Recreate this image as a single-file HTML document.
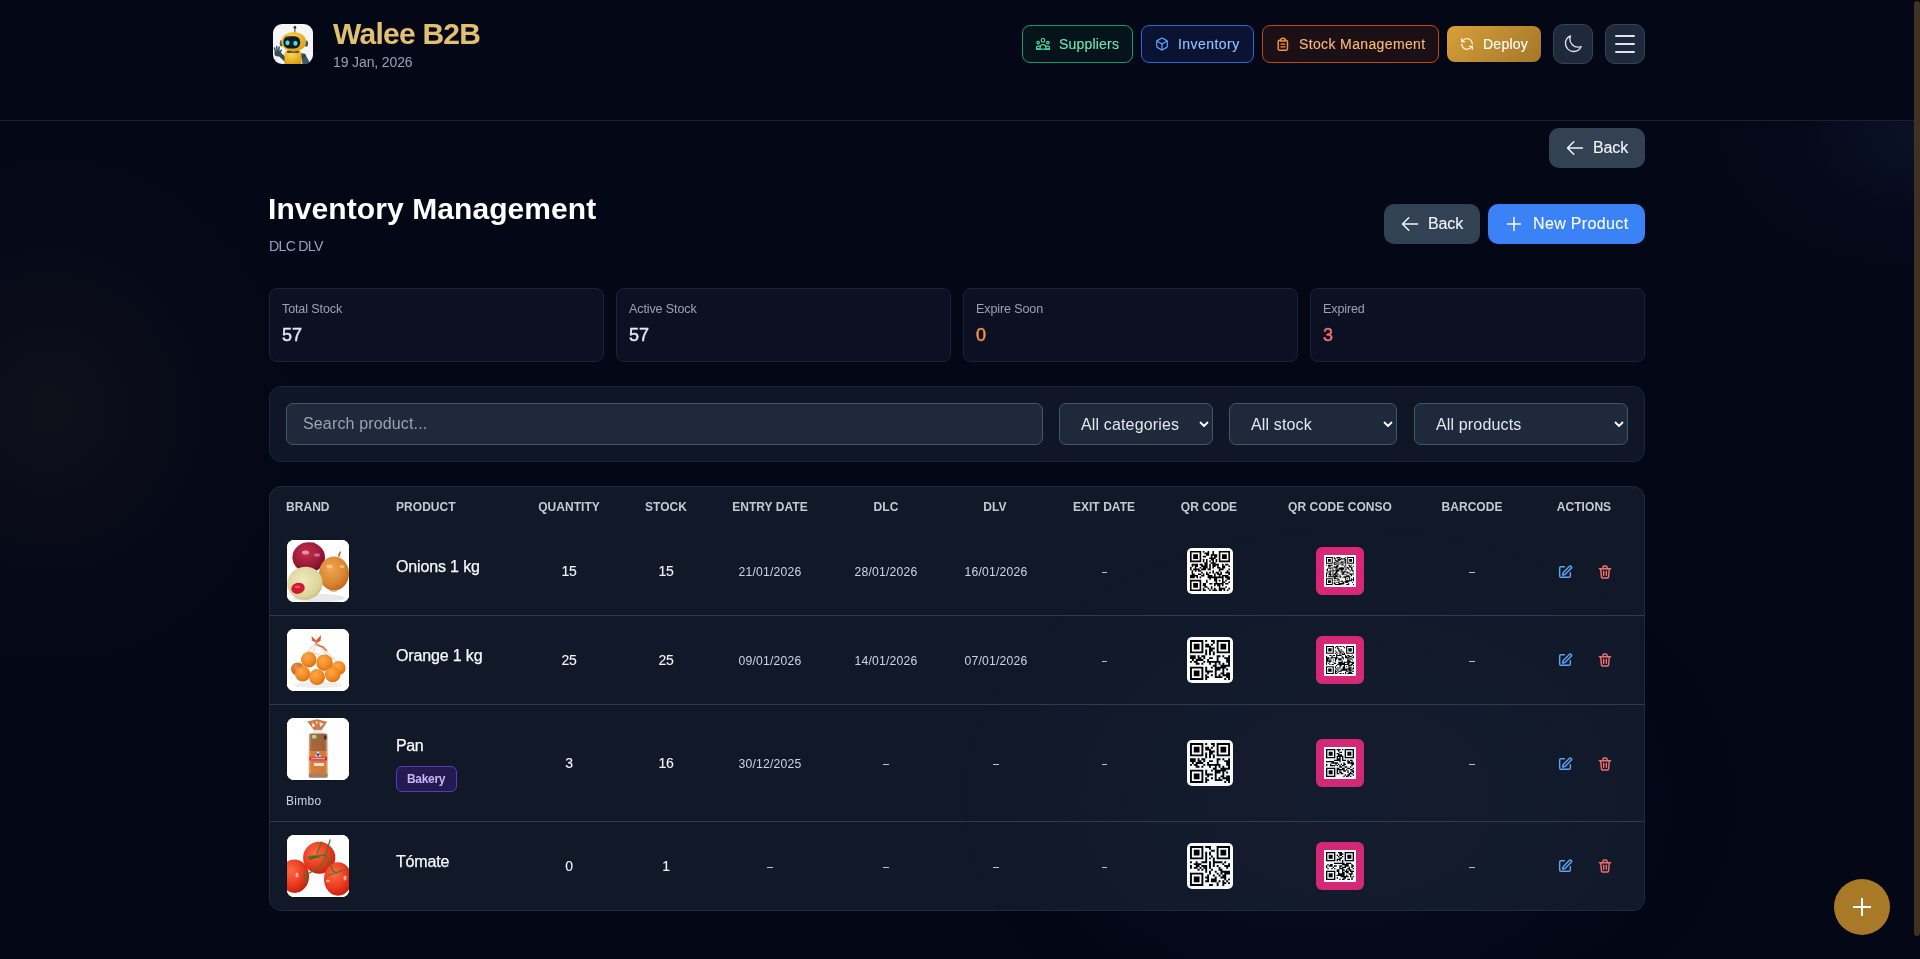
<!DOCTYPE html><html><head><meta charset="utf-8"><title>Inventory Management</title><style>
html,body{margin:0;padding:0;width:1920px;height:959px;overflow:hidden;background:#030716;}
#app{position:relative;width:1920px;height:959px;overflow:hidden;background:#030716;font-family:"Liberation Sans", sans-serif;}
.t{position:absolute;line-height:1;white-space:nowrap;will-change:transform;}
.b{position:absolute;box-sizing:border-box;}
</style></head><body><div id="app">
<div class="b" style="left:-230px;top:110px;width:560px;height:600px;border-radius:50%;background:radial-gradient(closest-side,rgba(34,32,34,0.38),rgba(24,22,28,0.14) 55%,rgba(0,0,0,0) 100%);"></div>
<div class="b" style="left:1000px;top:560px;width:620px;height:420px;border-radius:50%;background:radial-gradient(closest-side,rgba(40,60,90,0.10),rgba(0,0,0,0) 100%);"></div>
<div class="b" style="left:1500px;top:121px;width:420px;height:300px;overflow:hidden;"><div class="b" style="left:200px;top:-130px;width:440px;height:290px;border-radius:50%;background:radial-gradient(closest-side,rgba(35,55,95,0.24),rgba(20,30,60,0.07) 60%,rgba(0,0,0,0) 100%);"></div></div>
<div class="b" style="left:0px;top:120px;width:1920px;height:1px;background:#1a2030;"></div>
<svg class="b" style="left:273px;top:24px;" width="40" height="40" viewBox="0 0 40 40" fill="none"><defs><radialGradient id="yg" cx="0.4" cy="0.3" r="0.8"><stop offset="0" stop-color="#ffd54a"/><stop offset="1" stop-color="#d99a10"/></radialGradient></defs>
<rect x="0" y="0" width="40" height="40" rx="9" fill="#f6f6f6"/>
<line x1="21.9" y1="3.5" x2="21.9" y2="9" stroke="#3a3a3a" stroke-width="1"/><circle cx="21.9" cy="3.4" r="1.4" fill="#333"/>
<g fill="#35505c"><rect x="1.3" y="23.2" width="1.5" height="5.5" rx="0.75" transform="rotate(-18 2 26)"/><rect x="3.2" y="21.8" width="1.5" height="6" rx="0.75" transform="rotate(-6 4 25)"/><rect x="5.1" y="22.3" width="1.5" height="5.8" rx="0.75" transform="rotate(8 5.8 25)"/><rect x="7" y="25.2" width="1.5" height="4" rx="0.75" transform="rotate(35 7.7 27)"/><ellipse cx="4.8" cy="29.5" rx="3.4" ry="3"/><path d="M3.5 30 L7.5 28.5 L13 33 L12 38 Z"/></g>
<path d="M27.5 29 q4.5 0.5 6.5 4.5 l2.5 4.5 l-3 2 h-4z" fill="#3b5866"/><circle cx="30.5" cy="32" r="2.6" fill="#2e4853"/>
<path d="M11.5 30 q0-3 3-3.3 h11 q3 0.3 3 3.3 v10 h-17z" fill="url(#yg)"/>
<rect x="14" y="26.5" width="12" height="2.2" rx="1" fill="#2f3c42"/>
<ellipse cx="8.7" cy="19.3" rx="1.9" ry="3.2" fill="#3b5866"/><ellipse cx="33.2" cy="19.6" rx="1.9" ry="3.2" fill="#3b5866"/>
<ellipse cx="20.7" cy="17.8" rx="12.4" ry="9.9" fill="url(#yg)"/>
<rect x="10.4" y="12.2" width="16.8" height="12.2" rx="5.5" fill="#17191d"/>
<ellipse cx="14.6" cy="12.9" rx="3" ry="0.8" fill="#555" opacity=".6"/>
<ellipse cx="14.5" cy="18.8" rx="2.1" ry="2.5" fill="#2fe6f7"/><ellipse cx="22.4" cy="19.3" rx="2.1" ry="2.5" fill="#2fe6f7"/></svg>
<div class="t" style="top:18.90px;font-size:30px;color:#e2c072;font-weight:700;letter-spacing:-0.75px;left:333.3px;">Walee B2B</div>
<div class="t" style="top:55.15px;font-size:14px;color:#94a3b8;font-weight:400;letter-spacing:-0.12px;left:333px;">19 Jan, 2026</div>
<div class="b" style="left:1022px;top:25px;width:111px;height:38px;border-radius:8px;background:#04141a;border:1px solid #169a70;"></div>
<svg class="b" style="left:1035px;top:36px;" width="16" height="16" viewBox="0 0 24 24" fill="none"><g stroke="#4fd8a4" stroke-width="1.75" fill="none" stroke-linecap="round" stroke-linejoin="round"><ellipse cx="12" cy="6.5" rx="2.6" ry="2.9"/><circle cx="19.3" cy="9.9" r="1.9"/><circle cx="4.7" cy="9.9" r="1.9"/><path d="M7.6 19.8 v-2.3 a4.4 4.6 0 0 1 8.8 0 v2.3"/><path d="M2.3 19.8 h19.4"/><path d="M7.6 19.8 h-5.3 v-2.6 a1.9 1.9 0 0 1 1.9 -1.9 h3.6"/><path d="M16.4 19.8 h5.3 v-2.6 a1.9 1.9 0 0 0 -1.9 -1.9 h-3.6"/></g></svg>
<div class="t" style="top:37.15px;font-size:14px;color:#6ee7b7;font-weight:400;letter-spacing:0.2px;-webkit-text-stroke:0.12px #6ee7b7;left:1059px;">Suppliers</div>
<div class="b" style="left:1141px;top:25px;width:113px;height:38px;border-radius:8px;background:#0a1331;border:1px solid #2d62dc;"></div>
<svg class="b" style="left:1154px;top:36px;" width="16" height="16" viewBox="-1.6 -1.6 27.2 27.2" fill="none"><g stroke="#60a5fa" stroke-width="2" stroke-linecap="round" stroke-linejoin="round"><path d="M21 8a2 2 0 0 0-1-1.73l-7-4a2 2 0 0 0-2 0l-7 4A2 2 0 0 0 3 8v8a2 2 0 0 0 1 1.73l7 4a2 2 0 0 0 2 0l7-4A2 2 0 0 0 21 16Z"/><path d="m3.3 7 8.7 5 8.7-5"/><path d="M12 22V12"/></g></svg>
<div class="t" style="top:37.15px;font-size:14px;color:#93c5fd;font-weight:400;letter-spacing:0.45px;-webkit-text-stroke:0.12px #93c5fd;left:1178px;">Inventory</div>
<div class="b" style="left:1262px;top:25px;width:177px;height:38px;border-radius:8px;background:#1b1016;border:1px solid #c2470f;"></div>
<svg class="b" style="left:1275px;top:36px;" width="16" height="16" viewBox="0 0 16 16" fill="none"><g stroke="#fb923c" stroke-width="1.45" fill="none" stroke-linecap="round" stroke-linejoin="round"><path d="M5.5 4.3 H4.7 a1.5 1.5 0 0 0 -1.5 1.5 V12.8 a1.5 1.5 0 0 0 1.5 1.5 H11 a1.5 1.5 0 0 0 1.5 -1.5 V5.8 a1.5 1.5 0 0 0 -1.5 -1.5 H10.3"/><path d="M5.5 5 v-0.6 a2.4 2.1 0 0 1 4.8 0 v0.6 z"/><path d="M5.9 8.1 h4.2 M5.9 10.9 h4.2" stroke-width="1.1"/></g></svg>
<div class="t" style="top:37.15px;font-size:14px;color:#fdba74;font-weight:400;letter-spacing:0.37px;-webkit-text-stroke:0.12px #fdba74;left:1299px;">Stock Management</div>
<div class="b" style="left:1447px;top:26px;width:94px;height:36px;border-radius:8px;background:linear-gradient(135deg,#d6a03a,#a47628);"></div>
<svg class="b" style="left:1459px;top:36px;" width="16" height="16" viewBox="-1.6 -1.6 27.2 27.2" fill="none"><g stroke="#fff7e6" stroke-width="2" stroke-linecap="round" stroke-linejoin="round"><path d="M21 12a9 9 0 0 0-9-9 9.75 9.75 0 0 0-6.74 2.74L3 8"/><path d="M3 3v5h5"/><path d="M3 12a9 9 0 0 0 9 9 9.75 9.75 0 0 0 6.74-2.74L21 16"/><path d="M16 16h5v5"/></g></svg>
<div class="t" style="top:37.15px;font-size:14px;color:#ffffff;font-weight:400;letter-spacing:0.25px;-webkit-text-stroke:0.12px #ffffff;left:1482.5px;">Deploy</div>
<div class="b" style="left:1553px;top:24px;width:40px;height:40px;border-radius:10px;background:#1e293b;border:1px solid #354358;"></div>
<svg class="b" style="left:1563px;top:34px;" width="20" height="20" viewBox="0 0 24 24" fill="none"><path d="M21.752 15.002A9.72 9.72 0 0 1 18 15.75c-5.385 0-9.75-4.365-9.75-9.75 0-1.33.266-2.597.748-3.752A9.753 9.753 0 0 0 3 11.25C3 16.635 7.365 21 12.75 21a9.753 9.753 0 0 0 9.002-5.998Z" stroke="#dbe4f0" stroke-width="1.6" stroke-linecap="round" stroke-linejoin="round"/></svg>
<div class="b" style="left:1605px;top:24px;width:40px;height:40px;border-radius:10px;background:#1e293b;border:1px solid #354358;"></div>
<div class="b" style="left:1615px;top:35px;width:20px;height:2px;background:#dbe4f0;border-radius:1px;"></div>
<div class="b" style="left:1615px;top:43px;width:20px;height:2px;background:#dbe4f0;border-radius:1px;"></div>
<div class="b" style="left:1615px;top:51px;width:20px;height:2px;background:#dbe4f0;border-radius:1px;"></div>
<div class="b" style="left:1549px;top:128px;width:96px;height:40px;border-radius:10px;background:#334155;"></div>
<svg class="b" style="left:1564.5px;top:137.5px;" width="20" height="20" viewBox="0 0 24 24" fill="none"><path d="M10.5 19.5 3 12m0 0 7.5-7.5M3 12h18" stroke="#f1f5f9" stroke-width="1.8" stroke-linecap="round" stroke-linejoin="round"/></svg>
<div class="t" style="top:140.46px;font-size:16px;color:#f1f5f9;font-weight:400;letter-spacing:-0.1px;-webkit-text-stroke:0.12px #f1f5f9;left:1593px;">Back</div>
<div class="b" style="left:1384px;top:204px;width:96px;height:40px;border-radius:10px;background:#334155;"></div>
<svg class="b" style="left:1399.5px;top:213.5px;" width="20" height="20" viewBox="0 0 24 24" fill="none"><path d="M10.5 19.5 3 12m0 0 7.5-7.5M3 12h18" stroke="#f1f5f9" stroke-width="1.8" stroke-linecap="round" stroke-linejoin="round"/></svg>
<div class="t" style="top:216.46px;font-size:16px;color:#f1f5f9;font-weight:400;letter-spacing:-0.1px;-webkit-text-stroke:0.12px #f1f5f9;left:1428px;">Back</div>
<div class="b" style="left:1488px;top:204px;width:157px;height:40px;border-radius:10px;background:#3b82f6;"></div>
<svg class="b" style="left:1504px;top:214px;" width="20" height="20" viewBox="0 0 24 24" fill="none"><path d="M12 4.3v15.4M4.3 12h15.4" stroke="#f8fafc" stroke-width="1.8" stroke-linecap="round"/></svg>
<div class="t" style="top:216.46px;font-size:16px;color:#f8fafc;font-weight:400;letter-spacing:0.35px;-webkit-text-stroke:0.12px #f8fafc;left:1532.5px;">New Product</div>
<div class="t" style="top:194.41px;font-size:30px;color:#ffffff;font-weight:700;letter-spacing:0.08px;left:268.3px;">Inventory Management</div>
<div class="t" style="top:239.18px;font-size:14.2px;color:#94a3b8;font-weight:400;letter-spacing:-0.75px;left:268.8px;">DLC DLV</div>
<div class="b" style="left:269px;top:288px;width:335px;height:74px;border-radius:8px;background:#0b1122;border:1px solid #1b2335;"></div>
<div class="t" style="top:303.02px;font-size:12.5px;color:#9ca3af;font-weight:400;letter-spacing:-0.1px;left:282.3px;">Total Stock</div>
<div class="t" style="top:325.96px;font-size:18px;color:#e2e8f0;font-weight:400;letter-spacing:0.1px;-webkit-text-stroke:0.45px #e2e8f0;left:282.3px;">57</div>
<div class="b" style="left:616px;top:288px;width:335px;height:74px;border-radius:8px;background:#0b1122;border:1px solid #1b2335;"></div>
<div class="t" style="top:303.02px;font-size:12.5px;color:#9ca3af;font-weight:400;letter-spacing:-0.1px;left:629.3px;">Active Stock</div>
<div class="t" style="top:325.96px;font-size:18px;color:#e2e8f0;font-weight:400;letter-spacing:0.1px;-webkit-text-stroke:0.45px #e2e8f0;left:629.3px;">57</div>
<div class="b" style="left:963px;top:288px;width:335px;height:74px;border-radius:8px;background:#0b1122;border:1px solid #1b2335;"></div>
<div class="t" style="top:303.02px;font-size:12.5px;color:#9ca3af;font-weight:400;letter-spacing:-0.1px;left:976.3px;">Expire Soon</div>
<div class="t" style="top:325.96px;font-size:18px;color:#fb923c;font-weight:400;letter-spacing:0.1px;-webkit-text-stroke:0.45px #fb923c;left:976.3px;">0</div>
<div class="b" style="left:1310px;top:288px;width:335px;height:74px;border-radius:8px;background:#0b1122;border:1px solid #1b2335;"></div>
<div class="t" style="top:303.02px;font-size:12.5px;color:#9ca3af;font-weight:400;letter-spacing:-0.1px;left:1323.3px;">Expired</div>
<div class="t" style="top:325.96px;font-size:18px;color:#f87171;font-weight:400;letter-spacing:0.1px;-webkit-text-stroke:0.45px #f87171;left:1323.3px;">3</div>
<div class="b" style="left:269px;top:386px;width:1376px;height:76px;border-radius:12px;background:#0f1628;border:1px solid #1d2638;"></div>
<div class="b" style="left:286px;top:403px;width:757px;height:42px;border-radius:7px;background:#1e293b;border:1px solid #465569;"></div>
<div class="t" style="top:415.66px;font-size:16px;color:#9ca3af;font-weight:400;letter-spacing:0.15px;left:303.3px;">Search product...</div>
<div class="b" style="left:1059px;top:403px;width:154px;height:42px;border-radius:7px;background:#1e293b;border:1px solid #465569;"></div>
<div class="t" style="top:417.46px;font-size:16px;color:#e5e7eb;font-weight:400;letter-spacing:0.15px;left:1081px;">All categories</div>
<svg class="b" style="left:1199px;top:420.5px;" width="10" height="7" viewBox="0 0 10 7" fill="none"><path d="M1.5 1.5 L5 5 L8.5 1.5" stroke="#ffffff" stroke-width="1.8" stroke-linecap="round" stroke-linejoin="round"/></svg>
<div class="b" style="left:1229px;top:403px;width:168px;height:42px;border-radius:7px;background:#1e293b;border:1px solid #465569;"></div>
<div class="t" style="top:417.46px;font-size:16px;color:#e5e7eb;font-weight:400;letter-spacing:0.15px;left:1251px;">All stock</div>
<svg class="b" style="left:1383px;top:420.5px;" width="10" height="7" viewBox="0 0 10 7" fill="none"><path d="M1.5 1.5 L5 5 L8.5 1.5" stroke="#ffffff" stroke-width="1.8" stroke-linecap="round" stroke-linejoin="round"/></svg>
<div class="b" style="left:1414px;top:403px;width:214px;height:42px;border-radius:7px;background:#1e293b;border:1px solid #465569;"></div>
<div class="t" style="top:417.46px;font-size:16px;color:#e5e7eb;font-weight:400;letter-spacing:0.15px;left:1436px;">All products</div>
<svg class="b" style="left:1614px;top:420.5px;" width="10" height="7" viewBox="0 0 10 7" fill="none"><path d="M1.5 1.5 L5 5 L8.5 1.5" stroke="#ffffff" stroke-width="1.8" stroke-linecap="round" stroke-linejoin="round"/></svg>
<div class="b" style="left:269px;top:486px;width:1376px;height:425px;border-radius:12px;background:#111929;border:1px solid #1e2a3d;"></div>
<div class="b" style="left:270px;top:615px;width:1374px;height:1px;background:#2e3b50;"></div>
<div class="b" style="left:270px;top:704px;width:1374px;height:1px;background:#2e3b50;"></div>
<div class="b" style="left:270px;top:821px;width:1374px;height:1px;background:#2e3b50;"></div>
<div class="t" style="top:501.34px;font-size:12px;color:#c3cad5;font-weight:700;letter-spacing:0.05px;left:286px;">BRAND</div>
<div class="t" style="top:501.34px;font-size:12px;color:#c3cad5;font-weight:700;letter-spacing:0.05px;left:395.8px;">PRODUCT</div>
<div class="t" style="top:501.34px;font-size:12px;color:#c3cad5;font-weight:700;letter-spacing:0.05px;left:468.50px;width:200px;text-align:center;">QUANTITY</div>
<div class="t" style="top:501.34px;font-size:12px;color:#c3cad5;font-weight:700;letter-spacing:0.05px;left:565.50px;width:200px;text-align:center;">STOCK</div>
<div class="t" style="top:501.34px;font-size:12px;color:#c3cad5;font-weight:700;letter-spacing:0.05px;left:669.70px;width:200px;text-align:center;">ENTRY DATE</div>
<div class="t" style="top:501.34px;font-size:12px;color:#c3cad5;font-weight:700;letter-spacing:0.05px;left:785.80px;width:200px;text-align:center;">DLC</div>
<div class="t" style="top:501.34px;font-size:12px;color:#c3cad5;font-weight:700;letter-spacing:0.05px;left:895.40px;width:200px;text-align:center;">DLV</div>
<div class="t" style="top:501.34px;font-size:12px;color:#c3cad5;font-weight:700;letter-spacing:0.05px;left:1004.40px;width:200px;text-align:center;">EXIT DATE</div>
<div class="t" style="top:501.34px;font-size:12px;color:#c3cad5;font-weight:700;letter-spacing:0.05px;left:1109.20px;width:200px;text-align:center;">QR CODE</div>
<div class="t" style="top:501.34px;font-size:12px;color:#c3cad5;font-weight:700;letter-spacing:0.05px;left:1239.50px;width:200px;text-align:center;">QR CODE CONSO</div>
<div class="t" style="top:501.34px;font-size:12px;color:#c3cad5;font-weight:700;letter-spacing:0.05px;left:1372.00px;width:200px;text-align:center;">BARCODE</div>
<div class="t" style="top:501.34px;font-size:12px;color:#c3cad5;font-weight:700;letter-spacing:0.05px;left:1484.30px;width:200px;text-align:center;">ACTIONS</div>
<div class="b" style="left:286px;top:539px;width:64px;height:64px;border-radius:8px;overflow:hidden;border:1px solid #0c1322;background:#fff;"><svg width="62" height="62" viewBox="0 0 62 62" style="display:block"><defs>
<radialGradient id="on1" cx="0.42" cy="0.35" r="0.65"><stop offset="0" stop-color="#c4304f"/><stop offset="0.7" stop-color="#9a1838"/><stop offset="1" stop-color="#6e0f2a"/></radialGradient>
<radialGradient id="on2" cx="0.4" cy="0.35" r="0.7"><stop offset="0" stop-color="#f2a552"/><stop offset="0.65" stop-color="#da8530"/><stop offset="1" stop-color="#b8641c"/></radialGradient>
<radialGradient id="on3" cx="0.45" cy="0.4" r="0.7"><stop offset="0" stop-color="#eeebc4"/><stop offset="0.7" stop-color="#dcd49a"/><stop offset="1" stop-color="#b9ae6a"/></radialGradient>
</defs>
<rect width="62" height="62" fill="#fff"/>
<ellipse cx="32" cy="58" rx="26" ry="4" fill="#e8e8e8"/>
<ellipse cx="21.7" cy="17.3" rx="16.3" ry="15" fill="url(#on1)"/>
<path d="M24 3.5 q2-2 4 0 l-1 2 h-2z" fill="#8a2438"/>
<ellipse cx="18.5" cy="12.5" rx="3.5" ry="2" fill="#f0c0d0" opacity=".7"/><ellipse cx="30" cy="15" rx="3" ry="1.8" fill="#f0c0d0" opacity=".5"/>
<path d="M51 16 q0.5-4 2.5-5 q1 1 0 3 l-1 3z" fill="#b07a3c"/>
<ellipse cx="47" cy="33.5" rx="15" ry="17" fill="url(#on2)"/>
<ellipse cx="42.5" cy="26.5" rx="3" ry="1.8" fill="#fbd3a0" opacity=".8"/><ellipse cx="55" cy="26.5" rx="2.5" ry="1.8" fill="#fbd3a0" opacity=".6"/>
<path d="M42 49 q4 3 9 0 l-1 2 q-3 1.5-7 0z" fill="#c9a070"/>
<ellipse cx="18" cy="43.3" rx="17.8" ry="16.5" transform="rotate(-12 18 43.3)" fill="url(#on3)"/>
<ellipse cx="11" cy="48.3" rx="6.8" ry="5.5" transform="rotate(-15 11 48.3)" fill="#d0182e"/>
<ellipse cx="10.5" cy="47" rx="3" ry="1.2" fill="#f08090" opacity=".6"/></svg></div>
<div class="t" style="top:558.66px;font-size:16px;color:#f8fafc;font-weight:400;letter-spacing:-0.15px;-webkit-text-stroke:0.25px #f8fafc;left:396px;">Onions 1 kg</div>
<div class="t" style="top:563.65px;font-size:14px;color:#f1f5f9;font-weight:400;letter-spacing:-0.2px;-webkit-text-stroke:0.1px #f1f5f9;left:528.50px;width:80px;text-align:center;">15</div>
<div class="t" style="top:563.65px;font-size:14px;color:#f1f5f9;font-weight:400;letter-spacing:-0.2px;-webkit-text-stroke:0.1px #f1f5f9;left:625.50px;width:80px;text-align:center;">15</div>
<div class="t" style="top:565.87px;font-size:12.2px;color:#cbd5e1;font-weight:400;letter-spacing:0.2px;left:709.80px;width:120px;text-align:center;">21/01/2026</div>
<div class="t" style="top:565.87px;font-size:12.2px;color:#cbd5e1;font-weight:400;letter-spacing:0.2px;left:825.90px;width:120px;text-align:center;">28/01/2026</div>
<div class="t" style="top:565.87px;font-size:12.2px;color:#cbd5e1;font-weight:400;letter-spacing:0.2px;left:935.80px;width:120px;text-align:center;">16/01/2026</div>
<div class="b" style="left:1101.5px;top:571.6px;width:5.6px;height:1.1px;background:#b8c2d0;"></div>
<div class="b" style="left:1469.2px;top:571.6px;width:5.6px;height:1.1px;background:#b8c2d0;"></div>
<div class="b" style="left:1187px;top:548px;width:46px;height:46px;border-radius:5px;background:#fff;"></div>
<svg class="b" style="left:1190px;top:551px;" width="40" height="40" viewBox="0 0 25 25" fill="none"><path d="M0 0h7v1h-7zM8 0h1v1h-1zM11 0h1v1h-1zM14 0h1v1h-1zM18 0h7v1h-7zM0 1h1v1h-1zM6 1h1v1h-1zM9 1h3v1h-3zM14 1h1v1h-1zM18 1h1v1h-1zM24 1h1v1h-1zM0 2h1v1h-1zM2 2h3v1h-3zM6 2h1v1h-1zM10 2h2v1h-2zM13 2h4v1h-4zM18 2h1v1h-1zM20 2h3v1h-3zM24 2h1v1h-1zM0 3h1v1h-1zM2 3h3v1h-3zM6 3h1v1h-1zM8 3h2v1h-2zM13 3h1v1h-1zM15 3h2v1h-2zM18 3h1v1h-1zM20 3h3v1h-3zM24 3h1v1h-1zM0 4h1v1h-1zM2 4h3v1h-3zM6 4h1v1h-1zM12 4h4v1h-4zM18 4h1v1h-1zM20 4h3v1h-3zM24 4h1v1h-1zM0 5h1v1h-1zM6 5h1v1h-1zM8 5h1v1h-1zM10 5h1v1h-1zM13 5h2v1h-2zM16 5h1v1h-1zM18 5h1v1h-1zM24 5h1v1h-1zM0 6h7v1h-7zM8 6h1v1h-1zM10 6h1v1h-1zM12 6h1v1h-1zM14 6h1v1h-1zM16 6h1v1h-1zM18 6h7v1h-7zM9 7h2v1h-2zM13 7h3v1h-3zM1 8h4v1h-4zM6 8h2v1h-2zM9 8h2v1h-2zM12 8h1v1h-1zM14 8h4v1h-4zM20 8h1v1h-1zM22 8h2v1h-2zM1 9h1v1h-1zM3 9h2v1h-2zM7 9h4v1h-4zM12 9h1v1h-1zM14 9h2v1h-2zM17 9h1v1h-1zM20 9h2v1h-2zM24 9h1v1h-1zM0 10h1v1h-1zM3 10h1v1h-1zM6 10h1v1h-1zM8 10h3v1h-3zM12 10h1v1h-1zM14 10h1v1h-1zM17 10h2v1h-2zM20 10h2v1h-2zM0 11h1v1h-1zM2 11h4v1h-4zM7 11h3v1h-3zM11 11h2v1h-2zM18 11h3v1h-3zM24 11h1v1h-1zM1 12h1v1h-1zM3 12h1v1h-1zM5 12h2v1h-2zM14 12h1v1h-1zM18 12h1v1h-1zM23 12h1v1h-1zM1 13h1v1h-1zM7 13h1v1h-1zM10 13h1v1h-1zM12 13h1v1h-1zM14 13h1v1h-1zM16 13h2v1h-2zM19 13h1v1h-1zM22 13h3v1h-3zM1 14h2v1h-2zM5 14h2v1h-2zM8 14h1v1h-1zM10 14h2v1h-2zM15 14h1v1h-1zM17 14h3v1h-3zM24 14h1v1h-1zM0 15h5v1h-5zM7 15h2v1h-2zM11 15h3v1h-3zM15 15h1v1h-1zM18 15h1v1h-1zM20 15h4v1h-4zM0 16h3v1h-3zM4 16h1v1h-1zM6 16h1v1h-1zM11 16h10v1h-10zM22 16h3v1h-3zM12 17h1v1h-1zM15 17h2v1h-2zM20 17h1v1h-1zM23 17h2v1h-2zM0 18h7v1h-7zM10 18h1v1h-1zM15 18h2v1h-2zM18 18h1v1h-1zM20 18h1v1h-1zM22 18h1v1h-1zM0 19h1v1h-1zM6 19h1v1h-1zM10 19h1v1h-1zM16 19h1v1h-1zM20 19h2v1h-2zM24 19h1v1h-1zM0 20h1v1h-1zM2 20h3v1h-3zM6 20h1v1h-1zM8 20h2v1h-2zM12 20h2v1h-2zM15 20h6v1h-6zM22 20h2v1h-2zM0 21h1v1h-1zM2 21h3v1h-3zM6 21h1v1h-1zM8 21h2v1h-2zM15 21h1v1h-1zM17 21h2v1h-2zM20 21h1v1h-1zM0 22h1v1h-1zM2 22h3v1h-3zM6 22h1v1h-1zM9 22h2v1h-2zM13 22h1v1h-1zM18 22h1v1h-1zM22 22h1v1h-1zM0 23h1v1h-1zM6 23h1v1h-1zM8 23h1v1h-1zM11 23h1v1h-1zM13 23h1v1h-1zM15 23h1v1h-1zM18 23h4v1h-4zM24 23h1v1h-1zM0 24h7v1h-7zM8 24h2v1h-2zM12 24h1v1h-1zM14 24h3v1h-3zM18 24h2v1h-2zM21 24h1v1h-1zM23 24h1v1h-1z" fill="#000"/></svg>
<div class="b" style="left:1316px;top:547px;width:48px;height:48px;border-radius:6px;background:#db2777;"></div>
<div class="b" style="left:1324px;top:555px;width:32px;height:32px;background:#fff;"></div>
<svg class="b" style="left:1326px;top:557px;" width="28" height="28" viewBox="0 0 29 29" fill="none"><path d="M0 0h7v1h-7zM8 0h1v1h-1zM11 0h4v1h-4zM20 0h1v1h-1zM22 0h7v1h-7zM0 1h1v1h-1zM6 1h1v1h-1zM8 1h2v1h-2zM11 1h1v1h-1zM13 1h1v1h-1zM15 1h2v1h-2zM18 1h2v1h-2zM22 1h1v1h-1zM28 1h1v1h-1zM0 2h1v1h-1zM2 2h3v1h-3zM6 2h1v1h-1zM9 2h1v1h-1zM12 2h4v1h-4zM17 2h1v1h-1zM19 2h2v1h-2zM22 2h1v1h-1zM24 2h3v1h-3zM28 2h1v1h-1zM0 3h1v1h-1zM2 3h3v1h-3zM6 3h1v1h-1zM9 3h2v1h-2zM12 3h3v1h-3zM19 3h2v1h-2zM22 3h1v1h-1zM24 3h3v1h-3zM28 3h1v1h-1zM0 4h1v1h-1zM2 4h3v1h-3zM6 4h1v1h-1zM10 4h3v1h-3zM16 4h1v1h-1zM18 4h1v1h-1zM20 4h1v1h-1zM22 4h1v1h-1zM24 4h3v1h-3zM28 4h1v1h-1zM0 5h1v1h-1zM6 5h1v1h-1zM8 5h2v1h-2zM11 5h1v1h-1zM13 5h1v1h-1zM15 5h3v1h-3zM19 5h2v1h-2zM22 5h1v1h-1zM28 5h1v1h-1zM0 6h7v1h-7zM8 6h1v1h-1zM10 6h1v1h-1zM12 6h1v1h-1zM14 6h1v1h-1zM16 6h1v1h-1zM18 6h1v1h-1zM20 6h1v1h-1zM22 6h7v1h-7zM8 7h3v1h-3zM12 7h1v1h-1zM14 7h1v1h-1zM16 7h2v1h-2zM20 7h1v1h-1zM0 8h1v1h-1zM2 8h5v1h-5zM11 8h2v1h-2zM16 8h1v1h-1zM18 8h1v1h-1zM20 8h1v1h-1zM23 8h2v1h-2zM26 8h1v1h-1zM2 9h3v1h-3zM8 9h1v1h-1zM10 9h3v1h-3zM19 9h1v1h-1zM24 9h2v1h-2zM28 9h1v1h-1zM6 10h1v1h-1zM8 10h4v1h-4zM16 10h1v1h-1zM19 10h4v1h-4zM24 10h3v1h-3zM2 11h4v1h-4zM7 11h1v1h-1zM9 11h3v1h-3zM13 11h6v1h-6zM22 11h2v1h-2zM26 11h2v1h-2zM1 12h1v1h-1zM4 12h1v1h-1zM6 12h1v1h-1zM11 12h1v1h-1zM13 12h6v1h-6zM20 12h2v1h-2zM23 12h1v1h-1zM26 12h1v1h-1zM0 13h2v1h-2zM7 13h1v1h-1zM9 13h5v1h-5zM15 13h3v1h-3zM20 13h1v1h-1zM24 13h1v1h-1zM26 13h2v1h-2zM1 14h1v1h-1zM3 14h6v1h-6zM10 14h4v1h-4zM16 14h1v1h-1zM19 14h1v1h-1zM25 14h1v1h-1zM27 14h2v1h-2zM2 15h1v1h-1zM4 15h1v1h-1zM10 15h2v1h-2zM15 15h8v1h-8zM0 16h2v1h-2zM3 16h2v1h-2zM6 16h2v1h-2zM9 16h3v1h-3zM17 16h2v1h-2zM22 16h3v1h-3zM28 16h1v1h-1zM0 17h1v1h-1zM3 17h2v1h-2zM8 17h3v1h-3zM12 17h1v1h-1zM16 17h3v1h-3zM21 17h1v1h-1zM25 17h3v1h-3zM0 18h1v1h-1zM2 18h8v1h-8zM11 18h2v1h-2zM14 18h1v1h-1zM17 18h1v1h-1zM19 18h2v1h-2zM24 18h3v1h-3zM28 18h1v1h-1zM0 19h1v1h-1zM4 19h1v1h-1zM7 19h1v1h-1zM9 19h3v1h-3zM14 19h1v1h-1zM21 19h3v1h-3zM26 19h1v1h-1zM0 20h1v1h-1zM2 20h11v1h-11zM14 20h2v1h-2zM18 20h7v1h-7zM8 21h2v1h-2zM14 21h1v1h-1zM17 21h1v1h-1zM19 21h2v1h-2zM24 21h1v1h-1zM28 21h1v1h-1zM0 22h7v1h-7zM8 22h5v1h-5zM20 22h1v1h-1zM22 22h1v1h-1zM24 22h1v1h-1zM26 22h1v1h-1zM28 22h1v1h-1zM0 23h1v1h-1zM6 23h1v1h-1zM12 23h2v1h-2zM20 23h1v1h-1zM24 23h1v1h-1zM26 23h3v1h-3zM0 24h1v1h-1zM2 24h3v1h-3zM6 24h1v1h-1zM8 24h2v1h-2zM11 24h1v1h-1zM13 24h1v1h-1zM16 24h1v1h-1zM20 24h7v1h-7zM28 24h1v1h-1zM0 25h1v1h-1zM2 25h3v1h-3zM6 25h1v1h-1zM13 25h1v1h-1zM15 25h3v1h-3zM19 25h5v1h-5zM0 26h1v1h-1zM2 26h3v1h-3zM6 26h1v1h-1zM8 26h1v1h-1zM10 26h1v1h-1zM12 26h2v1h-2zM17 26h2v1h-2zM20 26h3v1h-3zM27 26h1v1h-1zM0 27h1v1h-1zM6 27h1v1h-1zM8 27h2v1h-2zM13 27h6v1h-6zM23 27h1v1h-1zM0 28h7v1h-7zM9 28h7v1h-7zM17 28h1v1h-1zM21 28h3v1h-3zM28 28h1v1h-1z" fill="#000"/></svg>
<svg class="b" style="left:1557px;top:564px;" width="16" height="16" viewBox="0 0 24 24" fill="none"><g stroke="#60a5fa" stroke-width="2.2" stroke-linecap="round" stroke-linejoin="round"><path d="M11 4H6a2 2 0 0 0-2 2v12a2 2 0 0 0 2 2h12a2 2 0 0 0 2-2v-5"/><path d="M18.4 3.6a2 2 0 0 1 2.9 2.9L12 15.8l-3.6.8.8-3.6z"/></g></svg>
<svg class="b" style="left:1597px;top:564px;" width="16" height="16" viewBox="0 0 24 24" fill="none"><g stroke="#f07070" stroke-width="2.2" stroke-linecap="round" stroke-linejoin="round"><path d="M3.5 7h17"/><path d="M5.5 7l1.2 12.5a2 2 0 0 0 2 1.5h6.6a2 2 0 0 0 2-1.5L18.5 7"/><path d="M9 7V4.5a1.5 1.5 0 0 1 1.5-1.5h3A1.5 1.5 0 0 1 15 4.5V7"/><path d="M10 11v6M14 11v6"/></g></svg>
<div class="b" style="left:286px;top:628px;width:64px;height:64px;border-radius:8px;overflow:hidden;border:1px solid #0c1322;background:#fff;"><svg width="62" height="62" viewBox="0 0 62 62" style="display:block"><defs>
<radialGradient id="or1" cx="0.4" cy="0.35" r="0.7"><stop offset="0" stop-color="#fba94a"/><stop offset="0.6" stop-color="#f38a22"/><stop offset="1" stop-color="#d96a12"/></radialGradient>
<radialGradient id="or2" cx="0.4" cy="0.35" r="0.7"><stop offset="0" stop-color="#e8904a"/><stop offset="1" stop-color="#b85a18"/></radialGradient>
</defs>
<rect width="62" height="62" fill="#fff"/>
<ellipse cx="31" cy="56" rx="24" ry="3" fill="#eee"/>
<path d="M29.5 13 L14 30 M29.5 13 L26 24 M29.5 13 L40 26 M29.5 13 L50 33 M20 22 L46 30" stroke="#f5b8a8" stroke-width="0.8" fill="none"/>
<path d="M30 16 L36 18 L40 22" stroke="#f06a3a" stroke-width="1.6" fill="none"/>
<path d="M24.5 7 L29 11.5 L34 6 L33.5 12 L29.5 14 L25 11.5z" fill="#f0502a"/>
<rect x="28.5" y="12" width="1.5" height="4" fill="#999"/>
<circle cx="10.5" cy="40" r="6.5" fill="url(#or2)"/>
<circle cx="51.6" cy="39" r="7" fill="url(#or1)"/>
<circle cx="21.7" cy="30.7" r="7.7" fill="url(#or1)"/>
<circle cx="37.5" cy="33.7" r="8.3" fill="url(#or1)"/>
<circle cx="15.6" cy="44.8" r="7.6" fill="url(#or1)"/>
<circle cx="45.7" cy="45.5" r="7.8" fill="url(#or1)"/>
<circle cx="30" cy="48.1" r="8" fill="url(#or1)"/></svg></div>
<div class="t" style="top:647.66px;font-size:16px;color:#f8fafc;font-weight:400;letter-spacing:-0.15px;-webkit-text-stroke:0.25px #f8fafc;left:396px;">Orange 1 kg</div>
<div class="t" style="top:652.65px;font-size:14px;color:#f1f5f9;font-weight:400;letter-spacing:-0.2px;-webkit-text-stroke:0.1px #f1f5f9;left:528.50px;width:80px;text-align:center;">25</div>
<div class="t" style="top:652.65px;font-size:14px;color:#f1f5f9;font-weight:400;letter-spacing:-0.2px;-webkit-text-stroke:0.1px #f1f5f9;left:625.50px;width:80px;text-align:center;">25</div>
<div class="t" style="top:654.87px;font-size:12.2px;color:#cbd5e1;font-weight:400;letter-spacing:0.2px;left:709.80px;width:120px;text-align:center;">09/01/2026</div>
<div class="t" style="top:654.87px;font-size:12.2px;color:#cbd5e1;font-weight:400;letter-spacing:0.2px;left:825.90px;width:120px;text-align:center;">14/01/2026</div>
<div class="t" style="top:654.87px;font-size:12.2px;color:#cbd5e1;font-weight:400;letter-spacing:0.2px;left:935.80px;width:120px;text-align:center;">07/01/2026</div>
<div class="b" style="left:1101.5px;top:660.6px;width:5.6px;height:1.1px;background:#b8c2d0;"></div>
<div class="b" style="left:1469.2px;top:660.6px;width:5.6px;height:1.1px;background:#b8c2d0;"></div>
<div class="b" style="left:1187px;top:637px;width:46px;height:46px;border-radius:5px;background:#fff;"></div>
<svg class="b" style="left:1190px;top:640px;" width="40" height="40" viewBox="0 0 21 21" fill="none"><path d="M0 0h7v1h-7zM8 0h1v1h-1zM11 0h2v1h-2zM14 0h7v1h-7zM0 1h1v1h-1zM6 1h1v1h-1zM12 1h1v1h-1zM14 1h1v1h-1zM20 1h1v1h-1zM0 2h1v1h-1zM2 2h3v1h-3zM6 2h1v1h-1zM8 2h2v1h-2zM11 2h1v1h-1zM14 2h1v1h-1zM16 2h3v1h-3zM20 2h1v1h-1zM0 3h1v1h-1zM2 3h3v1h-3zM6 3h1v1h-1zM8 3h3v1h-3zM14 3h1v1h-1zM16 3h3v1h-3zM20 3h1v1h-1zM0 4h1v1h-1zM2 4h3v1h-3zM6 4h1v1h-1zM10 4h3v1h-3zM14 4h1v1h-1zM16 4h3v1h-3zM20 4h1v1h-1zM0 5h1v1h-1zM6 5h1v1h-1zM8 5h1v1h-1zM10 5h2v1h-2zM14 5h1v1h-1zM20 5h1v1h-1zM0 6h7v1h-7zM8 6h1v1h-1zM10 6h1v1h-1zM12 6h1v1h-1zM14 6h7v1h-7zM8 7h1v1h-1zM10 7h1v1h-1zM12 7h1v1h-1zM0 8h3v1h-3zM4 8h1v1h-1zM6 8h2v1h-2zM14 8h2v1h-2zM17 8h1v1h-1zM20 8h1v1h-1zM0 9h3v1h-3zM4 9h2v1h-2zM7 9h1v1h-1zM10 9h2v1h-2zM14 9h1v1h-1zM18 9h3v1h-3zM1 10h1v1h-1zM3 10h4v1h-4zM9 10h1v1h-1zM14 10h1v1h-1zM19 10h2v1h-2zM0 11h1v1h-1zM2 11h2v1h-2zM7 11h1v1h-1zM9 11h7v1h-7zM19 11h2v1h-2zM3 12h2v1h-2zM6 12h1v1h-1zM10 12h1v1h-1zM13 12h1v1h-1zM15 12h1v1h-1zM17 12h1v1h-1zM20 12h1v1h-1zM12 13h2v1h-2zM16 13h5v1h-5zM0 14h7v1h-7zM8 14h1v1h-1zM11 14h1v1h-1zM13 14h6v1h-6zM0 15h1v1h-1zM6 15h1v1h-1zM8 15h1v1h-1zM13 15h3v1h-3zM17 15h1v1h-1zM19 15h1v1h-1zM0 16h1v1h-1zM2 16h3v1h-3zM6 16h1v1h-1zM8 16h4v1h-4zM13 16h1v1h-1zM17 16h1v1h-1zM0 17h1v1h-1zM2 17h3v1h-3zM6 17h1v1h-1zM9 17h1v1h-1zM13 17h1v1h-1zM16 17h2v1h-2zM19 17h2v1h-2zM0 18h1v1h-1zM2 18h3v1h-3zM6 18h1v1h-1zM8 18h1v1h-1zM11 18h1v1h-1zM13 18h1v1h-1zM15 18h1v1h-1zM17 18h4v1h-4zM0 19h1v1h-1zM6 19h1v1h-1zM8 19h2v1h-2zM13 19h4v1h-4zM19 19h2v1h-2zM0 20h7v1h-7zM8 20h1v1h-1zM18 20h1v1h-1zM20 20h1v1h-1z" fill="#000"/></svg>
<div class="b" style="left:1316px;top:636px;width:48px;height:48px;border-radius:6px;background:#db2777;"></div>
<div class="b" style="left:1324px;top:644px;width:32px;height:32px;background:#fff;"></div>
<svg class="b" style="left:1326px;top:646px;" width="28" height="28" viewBox="0 0 25 25" fill="none"><path d="M0 0h7v1h-7zM9 0h2v1h-2zM12 0h2v1h-2zM15 0h1v1h-1zM18 0h7v1h-7zM0 1h1v1h-1zM6 1h1v1h-1zM8 1h1v1h-1zM10 1h1v1h-1zM16 1h1v1h-1zM18 1h1v1h-1zM24 1h1v1h-1zM0 2h1v1h-1zM2 2h3v1h-3zM6 2h1v1h-1zM10 2h2v1h-2zM18 2h1v1h-1zM20 2h3v1h-3zM24 2h1v1h-1zM0 3h1v1h-1zM2 3h3v1h-3zM6 3h1v1h-1zM11 3h1v1h-1zM13 3h1v1h-1zM18 3h1v1h-1zM20 3h3v1h-3zM24 3h1v1h-1zM0 4h1v1h-1zM2 4h3v1h-3zM6 4h1v1h-1zM8 4h1v1h-1zM11 4h2v1h-2zM14 4h1v1h-1zM18 4h1v1h-1zM20 4h3v1h-3zM24 4h1v1h-1zM0 5h1v1h-1zM6 5h1v1h-1zM9 5h1v1h-1zM12 5h2v1h-2zM15 5h1v1h-1zM18 5h1v1h-1zM24 5h1v1h-1zM0 6h7v1h-7zM8 6h1v1h-1zM10 6h1v1h-1zM12 6h1v1h-1zM14 6h1v1h-1zM16 6h1v1h-1zM18 6h7v1h-7zM9 7h1v1h-1zM12 7h1v1h-1zM14 7h3v1h-3zM3 8h2v1h-2zM6 8h2v1h-2zM9 8h5v1h-5zM17 8h1v1h-1zM19 8h2v1h-2zM23 8h1v1h-1zM0 9h1v1h-1zM5 9h1v1h-1zM9 9h1v1h-1zM14 9h1v1h-1zM17 9h2v1h-2zM20 9h3v1h-3zM24 9h1v1h-1zM0 10h3v1h-3zM4 10h7v1h-7zM14 10h2v1h-2zM17 10h4v1h-4zM23 10h2v1h-2zM0 11h3v1h-3zM4 11h1v1h-1zM8 11h2v1h-2zM11 11h3v1h-3zM15 11h1v1h-1zM19 11h1v1h-1zM21 11h2v1h-2zM0 12h2v1h-2zM3 12h1v1h-1zM6 12h1v1h-1zM8 12h1v1h-1zM11 12h3v1h-3zM19 12h2v1h-2zM23 12h1v1h-1zM0 13h5v1h-5zM8 13h1v1h-1zM14 13h1v1h-1zM19 13h3v1h-3zM0 14h1v1h-1zM3 14h1v1h-1zM6 14h1v1h-1zM11 14h4v1h-4zM16 14h9v1h-9zM0 15h1v1h-1zM2 15h1v1h-1zM7 15h2v1h-2zM11 15h6v1h-6zM19 15h2v1h-2zM23 15h2v1h-2zM0 16h1v1h-1zM3 16h1v1h-1zM5 16h2v1h-2zM10 16h11v1h-11zM22 16h2v1h-2zM9 17h1v1h-1zM12 17h2v1h-2zM16 17h1v1h-1zM20 17h3v1h-3zM24 17h1v1h-1zM0 18h7v1h-7zM8 18h1v1h-1zM12 18h1v1h-1zM15 18h2v1h-2zM18 18h1v1h-1zM20 18h1v1h-1zM0 19h1v1h-1zM6 19h1v1h-1zM8 19h1v1h-1zM10 19h1v1h-1zM12 19h1v1h-1zM15 19h2v1h-2zM20 19h3v1h-3zM24 19h1v1h-1zM0 20h1v1h-1zM2 20h3v1h-3zM6 20h1v1h-1zM9 20h1v1h-1zM11 20h1v1h-1zM14 20h8v1h-8zM23 20h2v1h-2zM0 21h1v1h-1zM2 21h3v1h-3zM6 21h1v1h-1zM8 21h1v1h-1zM10 21h1v1h-1zM13 21h6v1h-6zM20 21h3v1h-3zM0 22h1v1h-1zM2 22h3v1h-3zM6 22h1v1h-1zM8 22h2v1h-2zM11 22h3v1h-3zM18 22h2v1h-2zM21 22h1v1h-1zM23 22h2v1h-2zM0 23h1v1h-1zM6 23h1v1h-1zM8 23h1v1h-1zM10 23h1v1h-1zM17 23h1v1h-1zM20 23h3v1h-3zM0 24h7v1h-7zM8 24h2v1h-2zM12 24h2v1h-2zM15 24h1v1h-1zM17 24h1v1h-1zM19 24h5v1h-5z" fill="#000"/></svg>
<svg class="b" style="left:1557px;top:652px;" width="16" height="16" viewBox="0 0 24 24" fill="none"><g stroke="#60a5fa" stroke-width="2.2" stroke-linecap="round" stroke-linejoin="round"><path d="M11 4H6a2 2 0 0 0-2 2v12a2 2 0 0 0 2 2h12a2 2 0 0 0 2-2v-5"/><path d="M18.4 3.6a2 2 0 0 1 2.9 2.9L12 15.8l-3.6.8.8-3.6z"/></g></svg>
<svg class="b" style="left:1597px;top:652px;" width="16" height="16" viewBox="0 0 24 24" fill="none"><g stroke="#f07070" stroke-width="2.2" stroke-linecap="round" stroke-linejoin="round"><path d="M3.5 7h17"/><path d="M5.5 7l1.2 12.5a2 2 0 0 0 2 1.5h6.6a2 2 0 0 0 2-1.5L18.5 7"/><path d="M9 7V4.5a1.5 1.5 0 0 1 1.5-1.5h3A1.5 1.5 0 0 1 15 4.5V7"/><path d="M10 11v6M14 11v6"/></g></svg>
<div class="b" style="left:286px;top:717px;width:64px;height:64px;border-radius:8px;overflow:hidden;border:1px solid #0c1322;background:#fff;"><svg width="62" height="62" viewBox="0 0 62 62" style="display:block"><defs>
<linearGradient id="br1" x1="0" x2="1"><stop offset="0" stop-color="#d9b596"/><stop offset="0.12" stop-color="#a86a3e"/><stop offset="0.85" stop-color="#9c6038"/><stop offset="1" stop-color="#d2a888"/></linearGradient>
<linearGradient id="br2" x1="0" x2="1"><stop offset="0" stop-color="#e0b088"/><stop offset="0.12" stop-color="#d8803a"/><stop offset="0.88" stop-color="#d27a36"/><stop offset="1" stop-color="#e2b894"/></linearGradient>
</defs>
<rect width="62" height="62" fill="#fff"/>
<path d="M20.4 3.5 L30 1.3 L40.3 3.8 L34.6 12 L26.8 12z" fill="#cc7e4a"/>
<path d="M25 4.5 L28.5 7.5 L25.5 9.5z M32.5 4 L36.5 6 L33 9z M29 3 L31 4.5 L29 6z" fill="#fff" opacity=".85"/>
<path d="M26.8 12 h7.8 l1.5 3.4 h-10.8z" fill="#e4e7ec"/>
<rect x="21.8" y="15.4" width="18.8" height="44" rx="1.5" fill="url(#br1)"/>
<rect x="21.8" y="33" width="18.8" height="23" fill="url(#br2)"/>
<rect x="25" y="17" width="4.5" height="3.5" rx="1" fill="#9fd8a8"/>
<rect x="37" y="17.5" width="2.5" height="4" fill="#333"/>
<path d="M28 38.5 l3-5.5 l3 5.5z" fill="#fff"/><circle cx="31" cy="36.6" r="1.7" fill="#2a66b8"/>
<rect x="22.5" y="38.8" width="17.5" height="3.6" fill="#d42a3c"/>
<rect x="24" y="39.7" width="14" height="1.6" fill="#fff" opacity=".55"/>
<rect x="27" y="45" width="10" height="3" fill="#fff" opacity=".75"/>
<rect x="21.8" y="55.5" width="18.8" height="4" rx="1" fill="#a8805e"/></svg></div>
<div class="t" style="top:795.44px;font-size:12px;color:#cbd5e1;font-weight:400;letter-spacing:0.3px;left:286.2px;">Bimbo</div>
<div class="t" style="top:738.06px;font-size:16px;color:#f8fafc;font-weight:400;letter-spacing:-0.45px;-webkit-text-stroke:0.25px #f8fafc;left:396px;">Pan</div>
<div class="b" style="left:396px;top:766px;width:61px;height:26px;border-radius:6px;background:#231b4f;border:1px solid #5d36c4;"></div>
<div class="t" style="top:772.84px;font-size:12px;color:#c4b5fd;font-weight:700;letter-spacing:-0.3px;left:407px;">Bakery</div>
<div class="t" style="top:755.65px;font-size:14px;color:#f1f5f9;font-weight:400;letter-spacing:-0.2px;-webkit-text-stroke:0.1px #f1f5f9;left:528.50px;width:80px;text-align:center;">3</div>
<div class="t" style="top:755.65px;font-size:14px;color:#f1f5f9;font-weight:400;letter-spacing:-0.2px;-webkit-text-stroke:0.1px #f1f5f9;left:625.50px;width:80px;text-align:center;">16</div>
<div class="t" style="top:757.87px;font-size:12.2px;color:#cbd5e1;font-weight:400;letter-spacing:0.2px;left:709.80px;width:120px;text-align:center;">30/12/2025</div>
<div class="b" style="left:883.1px;top:763.6px;width:5.6px;height:1.1px;background:#b8c2d0;"></div>
<div class="b" style="left:993.0px;top:763.6px;width:5.6px;height:1.1px;background:#b8c2d0;"></div>
<div class="b" style="left:1101.5px;top:763.6px;width:5.6px;height:1.1px;background:#b8c2d0;"></div>
<div class="b" style="left:1469.2px;top:763.6px;width:5.6px;height:1.1px;background:#b8c2d0;"></div>
<div class="b" style="left:1187px;top:740px;width:46px;height:46px;border-radius:5px;background:#fff;"></div>
<svg class="b" style="left:1190px;top:743px;" width="40" height="40" viewBox="0 0 21 21" fill="none"><path d="M0 0h7v1h-7zM8 0h1v1h-1zM11 0h2v1h-2zM14 0h7v1h-7zM0 1h1v1h-1zM6 1h1v1h-1zM12 1h1v1h-1zM14 1h1v1h-1zM20 1h1v1h-1zM0 2h1v1h-1zM2 2h3v1h-3zM6 2h1v1h-1zM8 2h2v1h-2zM11 2h1v1h-1zM14 2h1v1h-1zM16 2h3v1h-3zM20 2h1v1h-1zM0 3h1v1h-1zM2 3h3v1h-3zM6 3h1v1h-1zM8 3h3v1h-3zM14 3h1v1h-1zM16 3h3v1h-3zM20 3h1v1h-1zM0 4h1v1h-1zM2 4h3v1h-3zM6 4h1v1h-1zM10 4h3v1h-3zM14 4h1v1h-1zM16 4h3v1h-3zM20 4h1v1h-1zM0 5h1v1h-1zM6 5h1v1h-1zM8 5h1v1h-1zM10 5h2v1h-2zM14 5h1v1h-1zM20 5h1v1h-1zM0 6h7v1h-7zM8 6h1v1h-1zM10 6h1v1h-1zM12 6h1v1h-1zM14 6h7v1h-7zM8 7h1v1h-1zM10 7h1v1h-1zM12 7h1v1h-1zM0 8h3v1h-3zM4 8h1v1h-1zM6 8h2v1h-2zM14 8h2v1h-2zM17 8h1v1h-1zM20 8h1v1h-1zM0 9h3v1h-3zM4 9h2v1h-2zM7 9h1v1h-1zM10 9h2v1h-2zM14 9h1v1h-1zM18 9h3v1h-3zM1 10h1v1h-1zM3 10h4v1h-4zM9 10h1v1h-1zM14 10h1v1h-1zM19 10h2v1h-2zM0 11h1v1h-1zM2 11h2v1h-2zM7 11h1v1h-1zM9 11h7v1h-7zM19 11h2v1h-2zM3 12h2v1h-2zM6 12h1v1h-1zM10 12h1v1h-1zM13 12h1v1h-1zM15 12h1v1h-1zM17 12h1v1h-1zM20 12h1v1h-1zM12 13h2v1h-2zM16 13h5v1h-5zM0 14h7v1h-7zM8 14h1v1h-1zM11 14h1v1h-1zM13 14h6v1h-6zM0 15h1v1h-1zM6 15h1v1h-1zM8 15h1v1h-1zM13 15h3v1h-3zM17 15h1v1h-1zM19 15h1v1h-1zM0 16h1v1h-1zM2 16h3v1h-3zM6 16h1v1h-1zM8 16h4v1h-4zM13 16h1v1h-1zM17 16h1v1h-1zM0 17h1v1h-1zM2 17h3v1h-3zM6 17h1v1h-1zM9 17h1v1h-1zM13 17h1v1h-1zM16 17h2v1h-2zM19 17h2v1h-2zM0 18h1v1h-1zM2 18h3v1h-3zM6 18h1v1h-1zM8 18h1v1h-1zM11 18h1v1h-1zM13 18h1v1h-1zM15 18h1v1h-1zM17 18h4v1h-4zM0 19h1v1h-1zM6 19h1v1h-1zM8 19h2v1h-2zM13 19h4v1h-4zM19 19h2v1h-2zM0 20h7v1h-7zM8 20h1v1h-1zM18 20h1v1h-1zM20 20h1v1h-1z" fill="#000"/></svg>
<div class="b" style="left:1316px;top:739px;width:48px;height:48px;border-radius:6px;background:#db2777;"></div>
<div class="b" style="left:1324px;top:747px;width:32px;height:32px;background:#fff;"></div>
<svg class="b" style="left:1326px;top:749px;" width="28" height="28" viewBox="0 0 21 21" fill="none"><path d="M0 0h7v1h-7zM8 0h3v1h-3zM12 0h1v1h-1zM14 0h7v1h-7zM0 1h1v1h-1zM6 1h1v1h-1zM9 1h1v1h-1zM14 1h1v1h-1zM20 1h1v1h-1zM0 2h1v1h-1zM2 2h3v1h-3zM6 2h1v1h-1zM10 2h2v1h-2zM14 2h1v1h-1zM16 2h3v1h-3zM20 2h1v1h-1zM0 3h1v1h-1zM2 3h3v1h-3zM6 3h1v1h-1zM8 3h2v1h-2zM14 3h1v1h-1zM16 3h3v1h-3zM20 3h1v1h-1zM0 4h1v1h-1zM2 4h3v1h-3zM6 4h1v1h-1zM9 4h3v1h-3zM14 4h1v1h-1zM16 4h3v1h-3zM20 4h1v1h-1zM0 5h1v1h-1zM6 5h1v1h-1zM8 5h5v1h-5zM14 5h1v1h-1zM20 5h1v1h-1zM0 6h7v1h-7zM8 6h1v1h-1zM10 6h1v1h-1zM12 6h1v1h-1zM14 6h7v1h-7zM8 7h3v1h-3zM12 7h1v1h-1zM6 8h5v1h-5zM12 8h3v1h-3zM16 8h1v1h-1zM18 8h2v1h-2zM0 9h6v1h-6zM10 9h1v1h-1zM16 9h2v1h-2zM19 9h1v1h-1zM4 10h5v1h-5zM13 10h1v1h-1zM16 10h5v1h-5zM0 11h1v1h-1zM3 11h1v1h-1zM7 11h1v1h-1zM9 11h1v1h-1zM11 11h1v1h-1zM13 11h2v1h-2zM19 11h2v1h-2zM0 12h1v1h-1zM3 12h4v1h-4zM8 12h1v1h-1zM10 12h1v1h-1zM12 12h2v1h-2zM19 12h1v1h-1zM10 13h2v1h-2zM14 13h2v1h-2zM18 13h1v1h-1zM0 14h7v1h-7zM8 14h2v1h-2zM12 14h2v1h-2zM16 14h2v1h-2zM20 14h1v1h-1zM0 15h1v1h-1zM6 15h1v1h-1zM8 15h6v1h-6zM15 15h1v1h-1zM18 15h2v1h-2zM0 16h1v1h-1zM2 16h3v1h-3zM6 16h1v1h-1zM8 16h1v1h-1zM10 16h1v1h-1zM13 16h2v1h-2zM16 16h1v1h-1zM19 16h2v1h-2zM0 17h1v1h-1zM2 17h3v1h-3zM6 17h1v1h-1zM8 17h1v1h-1zM10 17h2v1h-2zM16 17h1v1h-1zM18 17h1v1h-1zM20 17h1v1h-1zM0 18h1v1h-1zM2 18h3v1h-3zM6 18h1v1h-1zM8 18h2v1h-2zM11 18h2v1h-2zM17 18h3v1h-3zM0 19h1v1h-1zM6 19h1v1h-1zM14 19h1v1h-1zM16 19h2v1h-2zM20 19h1v1h-1zM0 20h7v1h-7zM13 20h1v1h-1zM15 20h2v1h-2zM18 20h1v1h-1z" fill="#000"/></svg>
<svg class="b" style="left:1557px;top:756px;" width="16" height="16" viewBox="0 0 24 24" fill="none"><g stroke="#60a5fa" stroke-width="2.2" stroke-linecap="round" stroke-linejoin="round"><path d="M11 4H6a2 2 0 0 0-2 2v12a2 2 0 0 0 2 2h12a2 2 0 0 0 2-2v-5"/><path d="M18.4 3.6a2 2 0 0 1 2.9 2.9L12 15.8l-3.6.8.8-3.6z"/></g></svg>
<svg class="b" style="left:1597px;top:756px;" width="16" height="16" viewBox="0 0 24 24" fill="none"><g stroke="#f07070" stroke-width="2.2" stroke-linecap="round" stroke-linejoin="round"><path d="M3.5 7h17"/><path d="M5.5 7l1.2 12.5a2 2 0 0 0 2 1.5h6.6a2 2 0 0 0 2-1.5L18.5 7"/><path d="M9 7V4.5a1.5 1.5 0 0 1 1.5-1.5h3A1.5 1.5 0 0 1 15 4.5V7"/><path d="M10 11v6M14 11v6"/></g></svg>
<div class="b" style="left:286px;top:834px;width:64px;height:64px;border-radius:8px;overflow:hidden;border:1px solid #0c1322;background:#fff;"><svg width="62" height="62" viewBox="0 0 62 62" style="display:block"><defs>
<radialGradient id="tm1" cx="0.38" cy="0.35" r="0.7"><stop offset="0" stop-color="#ff6a45"/><stop offset="0.6" stop-color="#ea3a20"/><stop offset="1" stop-color="#c41e0e"/></radialGradient>
</defs>
<rect width="62" height="62" fill="#fff"/>
<ellipse cx="32.2" cy="22.8" rx="16.1" ry="16" fill="url(#tm1)"/>
<ellipse cx="7.5" cy="41.2" rx="14.5" ry="16.8" fill="url(#tm1)"/>
<ellipse cx="51" cy="44" rx="14" ry="16.7" fill="url(#tm1)"/>
<ellipse cx="10" cy="40" rx="1.5" ry="2.5" fill="#ffd0c0" opacity=".8"/><ellipse cx="58" cy="43" rx="1.5" ry="2.5" fill="#ffd0c0" opacity=".8"/><ellipse cx="41" cy="46" rx="2" ry="1.2" fill="#ffd0c0" opacity=".7"/>
<path d="M34.5 7 L30 19 M43 5 L40 16 L37.5 25 L33 32 L19 40 M21 22 L38 20 M40 22 L46 36 L50 38 M17 37 L19 47 M42 40 L60 34" stroke="#467a28" stroke-width="1.3" fill="none" stroke-linecap="round"/>
<path d="M22 23 q6-3 12-1 q-6 1-12 3z" fill="#3f6a22"/></svg></div>
<div class="t" style="top:853.66px;font-size:16px;color:#f8fafc;font-weight:400;letter-spacing:-0.15px;-webkit-text-stroke:0.25px #f8fafc;left:396px;">Tómate</div>
<div class="t" style="top:858.65px;font-size:14px;color:#f1f5f9;font-weight:400;letter-spacing:-0.2px;-webkit-text-stroke:0.1px #f1f5f9;left:528.50px;width:80px;text-align:center;">0</div>
<div class="t" style="top:858.65px;font-size:14px;color:#f1f5f9;font-weight:400;letter-spacing:-0.2px;-webkit-text-stroke:0.1px #f1f5f9;left:625.50px;width:80px;text-align:center;">1</div>
<div class="b" style="left:767.0px;top:866.6px;width:5.6px;height:1.1px;background:#b8c2d0;"></div>
<div class="b" style="left:883.1px;top:866.6px;width:5.6px;height:1.1px;background:#b8c2d0;"></div>
<div class="b" style="left:993.0px;top:866.6px;width:5.6px;height:1.1px;background:#b8c2d0;"></div>
<div class="b" style="left:1101.5px;top:866.6px;width:5.6px;height:1.1px;background:#b8c2d0;"></div>
<div class="b" style="left:1469.2px;top:866.6px;width:5.6px;height:1.1px;background:#b8c2d0;"></div>
<div class="b" style="left:1187px;top:843px;width:46px;height:46px;border-radius:5px;background:#fff;"></div>
<svg class="b" style="left:1190px;top:846px;" width="40" height="40" viewBox="0 0 21 21" fill="none"><path d="M0 0h7v1h-7zM8 0h3v1h-3zM14 0h7v1h-7zM0 1h1v1h-1zM6 1h1v1h-1zM10 1h1v1h-1zM14 1h1v1h-1zM20 1h1v1h-1zM0 2h1v1h-1zM2 2h3v1h-3zM6 2h1v1h-1zM11 2h2v1h-2zM14 2h1v1h-1zM16 2h3v1h-3zM20 2h1v1h-1zM0 3h1v1h-1zM2 3h3v1h-3zM6 3h1v1h-1zM8 3h1v1h-1zM10 3h1v1h-1zM14 3h1v1h-1zM16 3h3v1h-3zM20 3h1v1h-1zM0 4h1v1h-1zM2 4h3v1h-3zM6 4h1v1h-1zM8 4h1v1h-1zM10 4h1v1h-1zM14 4h1v1h-1zM16 4h3v1h-3zM20 4h1v1h-1zM0 5h1v1h-1zM6 5h1v1h-1zM8 5h1v1h-1zM11 5h1v1h-1zM14 5h1v1h-1zM20 5h1v1h-1zM0 6h7v1h-7zM8 6h1v1h-1zM10 6h1v1h-1zM12 6h1v1h-1zM14 6h7v1h-7zM8 7h1v1h-1zM12 7h1v1h-1zM0 8h1v1h-1zM3 8h1v1h-1zM6 8h3v1h-3zM10 8h1v1h-1zM12 8h5v1h-5zM18 8h1v1h-1zM2 9h4v1h-4zM10 9h1v1h-1zM12 9h1v1h-1zM17 9h1v1h-1zM20 9h1v1h-1zM0 10h1v1h-1zM3 10h2v1h-2zM6 10h3v1h-3zM10 10h1v1h-1zM12 10h1v1h-1zM14 10h1v1h-1zM18 10h3v1h-3zM0 11h1v1h-1zM2 11h2v1h-2zM5 11h1v1h-1zM7 11h2v1h-2zM10 11h1v1h-1zM15 11h1v1h-1zM19 11h1v1h-1zM4 12h1v1h-1zM6 12h1v1h-1zM8 12h1v1h-1zM11 12h1v1h-1zM15 12h2v1h-2zM8 13h1v1h-1zM10 13h1v1h-1zM13 13h1v1h-1zM16 13h5v1h-5zM0 14h7v1h-7zM10 14h1v1h-1zM14 14h1v1h-1zM16 14h1v1h-1zM18 14h3v1h-3zM0 15h1v1h-1zM6 15h1v1h-1zM9 15h1v1h-1zM12 15h1v1h-1zM15 15h1v1h-1zM17 15h2v1h-2zM0 16h1v1h-1zM2 16h3v1h-3zM6 16h1v1h-1zM8 16h2v1h-2zM13 16h1v1h-1zM16 16h3v1h-3zM0 17h1v1h-1zM2 17h3v1h-3zM6 17h1v1h-1zM9 17h1v1h-1zM11 17h3v1h-3zM18 17h1v1h-1zM20 17h1v1h-1zM0 18h1v1h-1zM2 18h3v1h-3zM6 18h1v1h-1zM8 18h2v1h-2zM11 18h3v1h-3zM15 18h1v1h-1zM17 18h1v1h-1zM19 18h1v1h-1zM0 19h1v1h-1zM6 19h1v1h-1zM14 19h1v1h-1zM17 19h2v1h-2zM20 19h1v1h-1zM0 20h7v1h-7zM10 20h2v1h-2zM14 20h1v1h-1zM17 20h1v1h-1z" fill="#000"/></svg>
<div class="b" style="left:1316px;top:842px;width:48px;height:48px;border-radius:6px;background:#db2777;"></div>
<div class="b" style="left:1324px;top:850px;width:32px;height:32px;background:#fff;"></div>
<svg class="b" style="left:1326px;top:852px;" width="28" height="28" viewBox="0 0 21 21" fill="none"><path d="M0 0h7v1h-7zM9 0h3v1h-3zM14 0h7v1h-7zM0 1h1v1h-1zM6 1h1v1h-1zM10 1h3v1h-3zM14 1h1v1h-1zM20 1h1v1h-1zM0 2h1v1h-1zM2 2h3v1h-3zM6 2h1v1h-1zM8 2h1v1h-1zM10 2h2v1h-2zM14 2h1v1h-1zM16 2h3v1h-3zM20 2h1v1h-1zM0 3h1v1h-1zM2 3h3v1h-3zM6 3h1v1h-1zM9 3h1v1h-1zM12 3h1v1h-1zM14 3h1v1h-1zM16 3h3v1h-3zM20 3h1v1h-1zM0 4h1v1h-1zM2 4h3v1h-3zM6 4h1v1h-1zM10 4h2v1h-2zM14 4h1v1h-1zM16 4h3v1h-3zM20 4h1v1h-1zM0 5h1v1h-1zM6 5h1v1h-1zM8 5h3v1h-3zM14 5h1v1h-1zM20 5h1v1h-1zM0 6h7v1h-7zM8 6h1v1h-1zM10 6h1v1h-1zM12 6h1v1h-1zM14 6h7v1h-7zM12 7h1v1h-1zM6 8h8v1h-8zM15 8h4v1h-4zM1 9h1v1h-1zM3 9h2v1h-2zM12 9h5v1h-5zM19 9h1v1h-1zM0 10h1v1h-1zM2 10h3v1h-3zM6 10h2v1h-2zM10 10h2v1h-2zM14 10h3v1h-3zM19 10h2v1h-2zM0 11h1v1h-1zM5 11h1v1h-1zM10 11h1v1h-1zM12 11h3v1h-3zM17 11h1v1h-1zM19 11h1v1h-1zM1 12h1v1h-1zM4 12h1v1h-1zM6 12h1v1h-1zM10 12h3v1h-3zM16 12h2v1h-2zM20 12h1v1h-1zM8 13h2v1h-2zM12 13h2v1h-2zM15 13h1v1h-1zM17 13h2v1h-2zM0 14h7v1h-7zM8 14h2v1h-2zM12 14h1v1h-1zM14 14h3v1h-3zM18 14h3v1h-3zM0 15h1v1h-1zM6 15h1v1h-1zM9 15h1v1h-1zM12 15h2v1h-2zM15 15h2v1h-2zM19 15h1v1h-1zM0 16h1v1h-1zM2 16h3v1h-3zM6 16h1v1h-1zM9 16h5v1h-5zM17 16h3v1h-3zM0 17h1v1h-1zM2 17h3v1h-3zM6 17h1v1h-1zM8 17h6v1h-6zM15 17h1v1h-1zM18 17h1v1h-1zM0 18h1v1h-1zM2 18h3v1h-3zM6 18h1v1h-1zM11 18h6v1h-6zM18 18h1v1h-1zM20 18h1v1h-1zM0 19h1v1h-1zM6 19h1v1h-1zM8 19h1v1h-1zM13 19h2v1h-2zM19 19h1v1h-1zM0 20h7v1h-7zM10 20h1v1h-1zM12 20h2v1h-2zM16 20h2v1h-2zM19 20h1v1h-1z" fill="#000"/></svg>
<svg class="b" style="left:1557px;top:858px;" width="16" height="16" viewBox="0 0 24 24" fill="none"><g stroke="#60a5fa" stroke-width="2.2" stroke-linecap="round" stroke-linejoin="round"><path d="M11 4H6a2 2 0 0 0-2 2v12a2 2 0 0 0 2 2h12a2 2 0 0 0 2-2v-5"/><path d="M18.4 3.6a2 2 0 0 1 2.9 2.9L12 15.8l-3.6.8.8-3.6z"/></g></svg>
<svg class="b" style="left:1597px;top:858px;" width="16" height="16" viewBox="0 0 24 24" fill="none"><g stroke="#f07070" stroke-width="2.2" stroke-linecap="round" stroke-linejoin="round"><path d="M3.5 7h17"/><path d="M5.5 7l1.2 12.5a2 2 0 0 0 2 1.5h6.6a2 2 0 0 0 2-1.5L18.5 7"/><path d="M9 7V4.5a1.5 1.5 0 0 1 1.5-1.5h3A1.5 1.5 0 0 1 15 4.5V7"/><path d="M10 11v6M14 11v6"/></g></svg>
<div class="b" style="left:950px;top:520px;width:800px;height:560px;border-radius:50%;background:radial-gradient(closest-side,rgba(60,80,120,0.07),rgba(60,80,120,0.025) 60%,rgba(0,0,0,0) 100%);"></div>
<div class="b" style="left:1834px;top:879px;width:56px;height:56px;border-radius:50%;background:#a87a28;"></div>
<svg class="b" style="left:1852px;top:897px;" width="20" height="20" viewBox="0 0 20 20" fill="none"><path d="M10 1v18M1 10h18" stroke="#fff" stroke-width="2"/></svg>
<div class="b" style="left:1914px;top:1px;width:6px;height:935px;border-radius:3px;background:#3f3224;"></div>
</div></body></html>
